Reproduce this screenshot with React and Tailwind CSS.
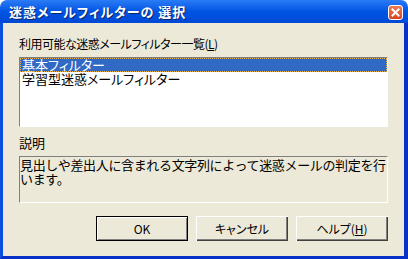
import React from 'react';

const font = { fontFamily: '"Noto Sans CJK JP", "Liberation Sans", sans-serif' };

function CloseButton() {
  return (
    <div className="w-[15px] h-[15px] rounded-[3px] border border-white bg-gradient-to-b from-[#f07a55] to-[#d8401c] flex items-center justify-center">
      <svg width="9" height="9" viewBox="0 0 9 9">
        <path d="M1.5 1.5 L7.5 7.5 M7.5 1.5 L1.5 7.5" stroke="#fff" strokeWidth="2" strokeLinecap="square" />
      </svg>
    </div>
  );
}

function Button({ children, isDefault }) {
  const base = 'w-[92px] h-[25px] flex items-center justify-center text-[12px] text-black bg-[#ece9d8]';
  const edge = isDefault
    ? 'border border-black shadow-[inset_1px_1px_0_#fff,inset_-1px_-1px_0_#808080]'
    : 'shadow-[inset_1px_1px_0_#fff,inset_-1px_-1px_0_#404040,inset_-2px_-2px_0_#808080]';
  return <div className={`${base} ${edge}`}>{children}</div>;
}

export default function App() {
  return (
    <div className="w-[408px] h-[259px] flex flex-col bg-white [font-feature-settings:'palt']" style={font}>
      {/* title bar */}
      <div className="h-[23px] shrink-0 rounded-t-[7px] bg-gradient-to-b from-[#2a7bf5] via-[#0054e3] to-[#0048d6] flex items-center pl-[9px] pr-[5px]">
        <span className="text-white font-bold text-[13px] leading-none tracking-[1px] [text-shadow:1px_1px_0_#0a246a]">
          迷惑メールフィルターの 選択
        </span>
        <div className="ml-auto mt-[2px]">
          <CloseButton />
        </div>
      </div>

      {/* body */}
      <div className="flex-1 flex flex-col bg-[#ece9d8] border-l-[3px] border-r-[4px] border-b-[3px] border-l-[#0a4fe0] border-r-[#0730c8] border-b-[#0730c8] px-[16px] pt-[13px]">
        <div className="h-[16px] text-[12px] leading-[16px] tracking-[-0.5px] text-black">
          利用可能な迷惑メールフィルター一覧(<span className="underline">L</span>)
        </div>

        <div className="mt-[5px] h-[70px] bg-white border-t border-l border-t-[#808080] border-l-[#808080] border-b border-r border-b-white border-r-white text-[13px] leading-[14px]">
          <div className="h-[14px] bg-[#316ac5] text-white outline outline-1 outline-dotted outline-[#e8b04c] -outline-offset-1 pl-[2px]">
            基本フィルター
          </div>
          <div className="h-[14px] text-black pl-[2px]">学習型迷惑メールフィルター</div>
        </div>

        <div className="mt-[8px] h-[16px] text-[13px] leading-[16px] text-black">説明</div>

        <div className="mt-[5px] h-[47px] border-t border-l border-t-[#808080] border-l-[#808080] border-b border-r border-b-white border-r-white text-[13px] leading-[14px] tracking-[-0.35px] text-black pt-[1px] whitespace-nowrap [font-feature-settings:normal]">
          <div>見出しや差出人に含まれる文字列によって迷惑メールの判定を行</div>
          <div>います。</div>
        </div>

        <div className="mt-[13px] flex justify-end gap-[8px]">
          <Button isDefault>OK</Button>
          <Button>キャンセル</Button>
          <Button>
            ヘルプ(<span className="underline">H</span>)
          </Button>
        </div>
      </div>
    </div>
  );
}
